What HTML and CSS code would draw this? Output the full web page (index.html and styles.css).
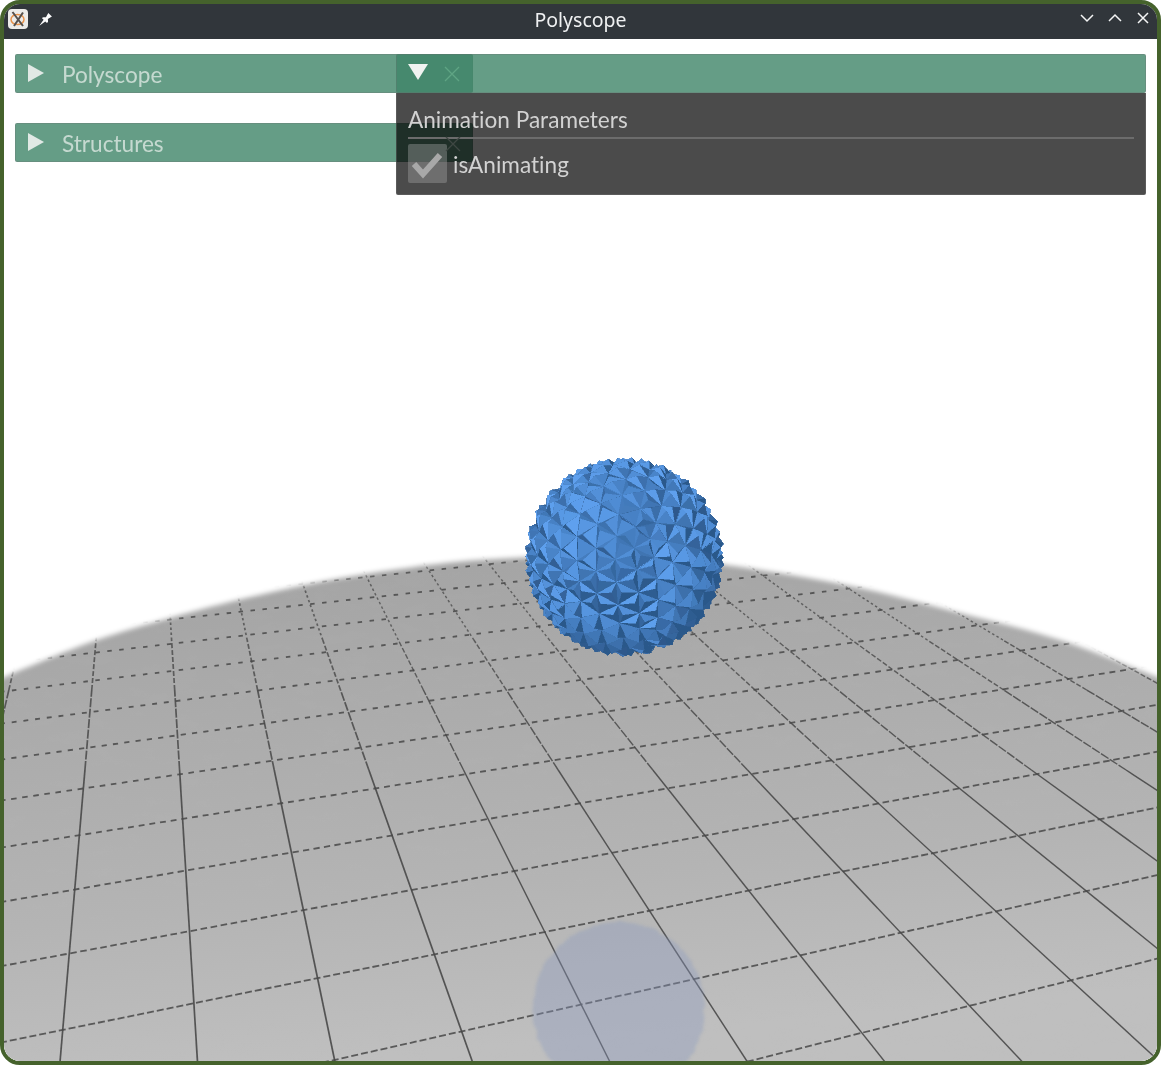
FILE: index.html
```html
<!DOCTYPE html>
<html lang="en">
<head>
<meta charset="utf-8">
<title>Polyscope</title>
<link rel="stylesheet" href="styles.css">
</head>
<body>
<div class="window">
  <header class="titlebar">
    <div class="tb-left">
      <svg class="app-icon" viewBox="0 0 20 20">
        <rect x="0" y="0" width="20" height="20" rx="4" fill="#ecebe8"/>
        <ellipse cx="9.5" cy="10.5" rx="6.5" ry="5" fill="none" stroke="#e8924a" stroke-width="1.5"/>
        <path d="M4.5 3 L15 17 M15 3.5 L6 17" fill="none" stroke="#55504c" stroke-width="2"/>
      </svg>
      <svg class="pin-icon" viewBox="0 0 14 14">
        <path d="M1 13 L5.2 7.2 L3.6 5.6 L5 4.8 L7.4 5 L9.6 1 L13 4.2 L9.2 6.6 L9.4 9 L8.4 10.2 L6.8 8.8 Z" fill="#fcfcfc"/>
      </svg>
    </div>
    <div class="tb-title">Polyscope</div>
    <div class="tb-controls">
      <svg class="ctl" viewBox="0 0 14 10"><path d="M1 2 L7 8 L13 2" /></svg>
      <svg class="ctl" viewBox="0 0 14 10"><path d="M1 8 L7 2 L13 8" /></svg>
      <svg class="ctl" viewBox="0 0 14 14"><path d="M2 2 L12 12 M12 2 L2 12" /></svg>
    </div>
  </header>
  <main class="viewport">
    <svg id="scene" class="scene" viewBox="4 39 1153 1022" preserveAspectRatio="none" xmlns="http://www.w3.org/2000/svg"></svg>

    <section class="gui gui-main">
      <div class="gui-bar"><span class="tri-right"></span><span class="gui-label">Polyscope</span></div>
    </section>
    <section class="gui gui-struct">
      <div class="gui-bar"><span class="tri-right"></span><span class="gui-label">Structures</span></div>
    </section>
    <section class="gui gui-user">
      <div class="gui-bar user-bar">
        <span class="tri-down"></span>
        <svg class="bar-x" viewBox="0 0 18 18"><path d="M2 2 L16 16 M16 2 L2 16"/></svg>
      </div>
      <div class="gui-body">
        <div class="gui-heading">Animation Parameters</div>
        <div class="gui-sep"></div>
        <div class="gui-check">
          <span class="checkbox">
            <svg viewBox="0 0 39 39"><path d="M6 20 L15 30 L32 11"/></svg>
          </span>
          <span class="check-label">isAnimating</span>
        </div>
      </div>
    </section>
    <svg class="ghost-x" viewBox="0 0 18 18"><path d="M2 2 L16 16 M16 2 L2 16"/></svg>
  </main>
</div>
<script src="scene.js"></script>
</body>
</html>
```

FILE: styles.css
```css
* { box-sizing: border-box; }
html, body { margin: 0; padding: 0; background: #fff; }
.window {
  width: 1161px;
  height: 1065px;
  border: 4px solid #45622c;
  border-radius: 20px;
  overflow: hidden;
  display: flex;
  flex-direction: column;
  background: #fff;
}
.titlebar {
  height: 35px;
  flex: none;
  background: #31363b;
  display: grid;
  grid-template-columns: 1fr auto 1fr;
  align-items: center;
  color: #eff0f1;
}
.tb-left { display: flex; align-items: center; gap: 10px; padding-left: 4px; margin-top: -5px; }
.app-icon { width: 20px; height: 20px; display: block; filter: blur(.5px); }
.pin-icon { width: 15px; height: 15px; display: block; }
.tb-title {
  font-family: "Noto Sans", sans-serif;
  font-size: 19.5px;
  line-height: 24px;
  margin-top: -4px;
  filter: blur(.3px);
}
.tb-controls { display: flex; justify-content: flex-end; align-items: center; gap: 14px; padding-right: 7px; margin-top: -7px; }
.ctl { width: 14px; height: 14px; display: block; fill: none; stroke: #f4f5f5; stroke-width: 1.5; }
.viewport { position: relative; flex: 1; overflow: hidden; border-radius: 0 0 14px 14px; background: #fff; }
.scene { position: absolute; inset: 0; width: 100%; height: 100%; display: block; }

.gui {
  position: absolute;
  font-family: Lato, sans-serif;
  font-size: 22.6px;
  font-variant-ligatures: none;
  filter: blur(.55px);
}
.gui-main { left: 11px; top: 15px; width: 458px; }
.gui-struct { left: 11px; top: 84px; width: 458px; }
.gui-user { left: 392px; top: 15px; width: 750px; }
.gui-bar {
  height: 39px;
  background: rgba(62, 132, 104, .8);
  border: 1px solid rgba(110, 110, 110, .3);
  border-radius: 2px;
  display: flex;
  align-items: center;
  color: #d6e4dd;
}
.gui-label { margin-left: 18px; margin-top: 1px; opacity: .85; }
.tri-right {
  margin-left: 12px;
  width: 0; height: 0;
  border-left: 16px solid #e1e9e5;
  border-top: 9px solid transparent;
  border-bottom: 9px solid transparent;
  margin-top: -2px;
}
.tri-down {
  margin-left: 11px;
  width: 0; height: 0;
  border-top: 16px solid #f0f3f1;
  border-left: 10px solid transparent;
  border-right: 10px solid transparent;
  margin-top: -3px;
}
.bar-x { width: 18px; height: 18px; margin-left: 15px; fill: none; stroke: #5fa484; stroke-width: 1.3; }
.gui-body {
  height: 102px;
  background: rgba(3, 3, 3, .714);
  border: 1px solid rgba(120, 120, 120, .35);
  border-top: 0;
  border-radius: 0 0 2px 2px;
  padding: 12px 11px 0;
  color: #d2d2d2;
}
.gui-heading { line-height: 29px; }
.gui-sep { height: 2px; background: #6c6c6c; margin-top: 3px; }
.gui-check { display: flex; align-items: center; gap: 6px; margin-top: 5px; }
.checkbox {
  width: 39px; height: 39px;
  background: rgba(156, 156, 156, .43);
  border-radius: 2px;
  display: block;
}
.checkbox svg { width: 39px; height: 39px; display: block; fill: none; stroke: #a8a8a8; stroke-width: 6; }
.check-label { margin-top: 1px; }
.ghost-x {
  position: absolute;
  left: 440px; top: 96px;
  width: 18px; height: 18px;
  fill: none; stroke: #3f4743; stroke-width: 1.3;
  filter: blur(.4px);
}
```

FILE: scene.js
```js
(function () {
  var NS = 'http://www.w3.org/2000/svg';
  var svg = document.getElementById('scene');
  function el(name, attrs, parent) {
    var e = document.createElementNS(NS, name);
    for (var k in attrs) e.setAttribute(k, attrs[k]);
    (parent || svg).appendChild(e);
    return e;
  }

  /* ---------- defs ---------- */
  var defs = el('defs', {});
  var grad = el('linearGradient', { id: 'floor', x1: 0, y1: 0, x2: 0.2, y2: 1 }, defs);
  el('stop', { offset: '0', 'stop-color': '#a2a2a2' }, grad);
  el('stop', { offset: '.3', 'stop-color': '#aaaaaa' }, grad);
  el('stop', { offset: '.7', 'stop-color': '#b4b4b4' }, grad);
  el('stop', { offset: '1', 'stop-color': '#bfbfbf' }, grad);
  var f1 = el('filter', { id: 'edge', x: '-5%', y: '-5%', width: '110%', height: '110%' }, defs);
  el('feGaussianBlur', { stdDeviation: '2.6' }, f1);
  var f2 = el('filter', { id: 'shadowblur', x: '-10%', y: '-10%', width: '120%', height: '120%' }, defs);
  el('feTurbulence', { type: 'fractalNoise', baseFrequency: '.12', numOctaves: '2', seed: '7', result: 'n' }, f2);
  el('feDisplacementMap', { in: 'SourceGraphic', in2: 'n', scale: '5', xChannelSelector: 'R', yChannelSelector: 'G', result: 'd' }, f2);
  el('feGaussianBlur', { in: 'd', stdDeviation: '1.6' }, f2);
  var f3 = el('filter', { id: 'soft', x: '-2%', y: '-2%', width: '104%', height: '104%' }, defs);
  el('feGaussianBlur', { stdDeviation: '.55' }, f3);
  var f4 = el('filter', { id: 'grain', x: '0', y: '0', width: '100%', height: '100%' }, defs);
  el('feTurbulence', { type: 'fractalNoise', baseFrequency: '.035 .09', numOctaves: '3', seed: '4' }, f4);
  el('feColorMatrix', { values: '0 0 0 0 .5  0 0 0 0 .5  0 0 0 0 .5  1.6 0 0 0 -.72' }, f4);

  /* ---------- floor disc outline ---------- */
  var pts = [[-5, 682], [5, 677], [33, 665], [97, 640], [170, 618], [238, 600], [320, 582], [400, 569], [480, 560], [580, 556], [680, 560], [760, 570], [860, 588], [960, 613], [1060, 640], [1157, 677], [1170, 683]];
  var d = 'M' + pts[0].join(' ');
  for (var i = 0; i < pts.length - 1; i++) {
    var p0 = pts[Math.max(0, i - 1)], p1 = pts[i], p2 = pts[i + 1], p3 = pts[Math.min(pts.length - 1, i + 2)];
    d += ' C' + (p1[0] + (p2[0] - p0[0]) / 6) + ' ' + (p1[1] + (p2[1] - p0[1]) / 6) + ' ' +
      (p2[0] - (p3[0] - p1[0]) / 6) + ' ' + (p2[1] - (p3[1] - p1[1]) / 6) + ' ' + p2[0] + ' ' + p2[1];
  }
  d += ' L1170 1075 L-5 1075 Z';
  var maskEl = el('mask', { id: 'discmask', maskUnits: 'userSpaceOnUse', x: -10, y: 500, width: 1190, height: 600 }, defs);
  el('path', { d: d, fill: '#fff', filter: 'url(#edge)' }, maskEl);

  var floor = el('g', { mask: 'url(#discmask)' });
  el('rect', { x: -5, y: 550, width: 1175, height: 520, fill: 'url(#floor)' }, floor);
  el('rect', { x: -5, y: 550, width: 1175, height: 520, filter: 'url(#grain)', opacity: '.13' }, floor);

  /* ---------- grid lines ---------- */
  var grid = el('g', { fill: 'none', stroke: '#484848', filter: 'url(#soft)' }, floor);
  var VP1 = [140, 125], VP2 = [4310, 167];

  function lineAt(k, y) {
    var xb = 60 + 137.5 * k;
    return VP1[0] + (xb - VP1[0]) * (y - VP1[1]) / (1062 - VP1[1]);
  }
  function seg(x1, y1, x2, y2, w, dash, op) {
    var a = { x1: x1, y1: y1, x2: x2, y2: y2, 'stroke-width': w, opacity: op };
    if (dash) a['stroke-dasharray'] = dash;
    el('line', a, grid);
  }
  /* lines running away from the viewer, solid near and broken up far */
  var bands = [[1066, 770, null, .9], [770, 690, '9 1.5', .85], [690, 640, '5 2', .8], [640, 550, '2.5 2.5', .75]];
  for (var k = -2; k <= 24; k++) {
    var steep = Math.abs(lineAt(k, 1062) - 140) / 937;
    var w = steep < 0.45 ? 1.7 : 1.45;
    bands.forEach(function (b) {
      seg(lineAt(k, b[0]), b[0], lineAt(k, b[1]), b[1], w, b[2], b[3]);
    });
  }
  /* cross lines, each a constant step in 1/depth */
  for (var n = -1; n < 30; n++) {
    var c = 167 + 1 / (0.000924 + 0.000109 * n);
    var yR = c + (VP2[1] - c) * 1175 / VP2[0];
    var t = n < 2 ? 0 : Math.min(1, (n - 2) / 7);
    var dash = (7 - 2.5 * t).toFixed(1) + ' ' + (3 + 4.5 * t).toFixed(1);
    el('line', { x1: 0, y1: c, x2: 1175, y2: yR, 'stroke-width': 1.8, 'stroke-dasharray': dash, stroke: '#484848', opacity: .85 }, grid);
  }

  /* ---------- reflection of the sphere ---------- */
  el('circle', { cx: 619, cy: 1008, r: 86, fill: '#8a9ac0', opacity: '.36', filter: 'url(#shadowblur)' }, floor);

  /* ---------- faceted sphere ---------- */
  var g = (1 + Math.sqrt(5)) / 2;
  var V = [[-1, g, 0], [1, g, 0], [-1, -g, 0], [1, -g, 0], [0, -1, g], [0, 1, g], [0, -1, -g], [0, 1, -g], [g, 0, -1], [g, 0, 1], [-g, 0, -1], [-g, 0, 1]];
  var F = [[0, 11, 5], [0, 5, 1], [0, 1, 7], [0, 7, 10], [0, 10, 11], [1, 5, 9], [5, 11, 4], [11, 10, 2], [10, 7, 6], [7, 1, 8], [3, 9, 4], [3, 4, 2], [3, 2, 6], [3, 6, 8], [3, 8, 9], [4, 9, 5], [2, 4, 11], [6, 2, 10], [8, 6, 7], [9, 8, 1]];
  function norm(a) { var l = Math.hypot(a[0], a[1], a[2]); return [a[0] / l, a[1] / l, a[2] / l]; }
  function cross(a, b) { return [a[1] * b[2] - a[2] * b[1], a[2] * b[0] - a[0] * b[2], a[0] * b[1] - a[1] * b[0]]; }
  function sub(a, b) { return [a[0] - b[0], a[1] - b[1], a[2] - b[2]]; }
  function dot(a, b) { return a[0] * b[0] + a[1] * b[1] + a[2] * b[2]; }

  var ax = 0.42, ay = 0.31, az = 0.2;
  function rot(p) {
    var x = p[0], y = p[1], z = p[2], t;
    t = y * Math.cos(ax) - z * Math.sin(ax); z = y * Math.sin(ax) + z * Math.cos(ax); y = t;
    t = x * Math.cos(ay) + z * Math.sin(ay); z = -x * Math.sin(ay) + z * Math.cos(ay); x = t;
    t = x * Math.cos(az) - y * Math.sin(az); y = x * Math.sin(az) + y * Math.cos(az); x = t;
    return [x, y, z];
  }
  function scale(p, s) { return [p[0] * s, p[1] * s, p[2] * s]; }

  var f = 5, rBase = 0.985, rApex = 1.05, twist = 0.32;
  function gridPt(face, i, j) {
    var a = norm(V[face[0]]), b = norm(V[face[1]]), c = norm(V[face[2]]);
    var u = i / f, v = j / f, w = 1 - u - v;
    return norm([a[0] * w + b[0] * u + c[0] * v, a[1] * w + b[1] * u + c[1] * v, a[2] * w + b[2] * u + c[2] * v]);
  }
  var tris = [];
  function pyramid(a, b, c) {
    /* each coarse triangle becomes a low pyramid whose apex leans towards its first corner */
    var cen = [(a[0] + b[0] + c[0]) / 3, (a[1] + b[1] + c[1]) / 3, (a[2] + b[2] + c[2]) / 3];
    var apex = scale(norm([cen[0] + (a[0] - cen[0]) * twist, cen[1] + (a[1] - cen[1]) * twist, cen[2] + (a[2] - cen[2]) * twist]), rApex);
    var A = rot(scale(a, rBase)), B = rot(scale(b, rBase)), C = rot(scale(c, rBase)), P = rot(apex);
    tris.push([A, B, P], [B, C, P], [C, A, P]);
  }
  F.forEach(function (face) {
    for (var i = 0; i < f; i++) {
      for (var j = 0; j < f - i; j++) {
        pyramid(gridPt(face, i, j), gridPt(face, i + 1, j), gridPt(face, i, j + 1));
        if (i + j < f - 1) pyramid(gridPt(face, i + 1, j), gridPt(face, i + 1, j + 1), gridPt(face, i, j + 1));
      }
    }
  });

  var L = norm([-0.18, 0.32, 0.93]);
  var R = 95, cx = 624.5, cy = 557;
  tris.forEach(function (t) {
    t.z = (t[0][2] + t[1][2] + t[2][2]) / 3;
    var n = norm(cross(sub(t[1], t[0]), sub(t[2], t[0])));
    var m = norm([t[0][0] + t[1][0] + t[2][0], t[0][1] + t[1][1] + t[2][1], t[0][2] + t[1][2] + t[2][2]]);
    if (dot(n, m) < 0) n = [-n[0], -n[1], -n[2]];
    t.n = n;
  });
  tris.sort(function (a, b) { return a.z - b.z; });
  var sphere = el('g', { filter: 'url(#soft)' });
  el('circle', { cx: cx, cy: cy, r: R - 1, fill: '#4a82c6' }, sphere);
  var tg = el('g', { 'shape-rendering': 'crispEdges' }, sphere);
  var dark = [44, 88, 138], mid = [72, 130, 198], light = [94, 160, 238];
  function mix(a, b, s) { return Math.round(a + (b - a) * s); }
  tris.forEach(function (t) {
    if (t.z < -0.12) return;
    var l = Math.max(0, dot(t.n, L));
    var s = Math.min(1, Math.max(0, (l - 0.3) / 0.68));
    var c0 = s < 0.6 ? dark : mid, c1 = s < 0.6 ? mid : light, q = s < 0.6 ? s / 0.6 : (s - 0.6) / 0.4;
    var col = 'rgb(' + mix(c0[0], c1[0], q) + ',' + mix(c0[1], c1[1], q) + ',' + mix(c0[2], c1[2], q) + ')';
    var P = t.slice(0, 3).map(function (p) { return (cx + p[0] * R).toFixed(1) + ',' + (cy - p[1] * R).toFixed(1); }).join(' ');
    el('polygon', { points: P, fill: col, stroke: col, 'stroke-width': '.5' }, tg);
  });
})();
```
